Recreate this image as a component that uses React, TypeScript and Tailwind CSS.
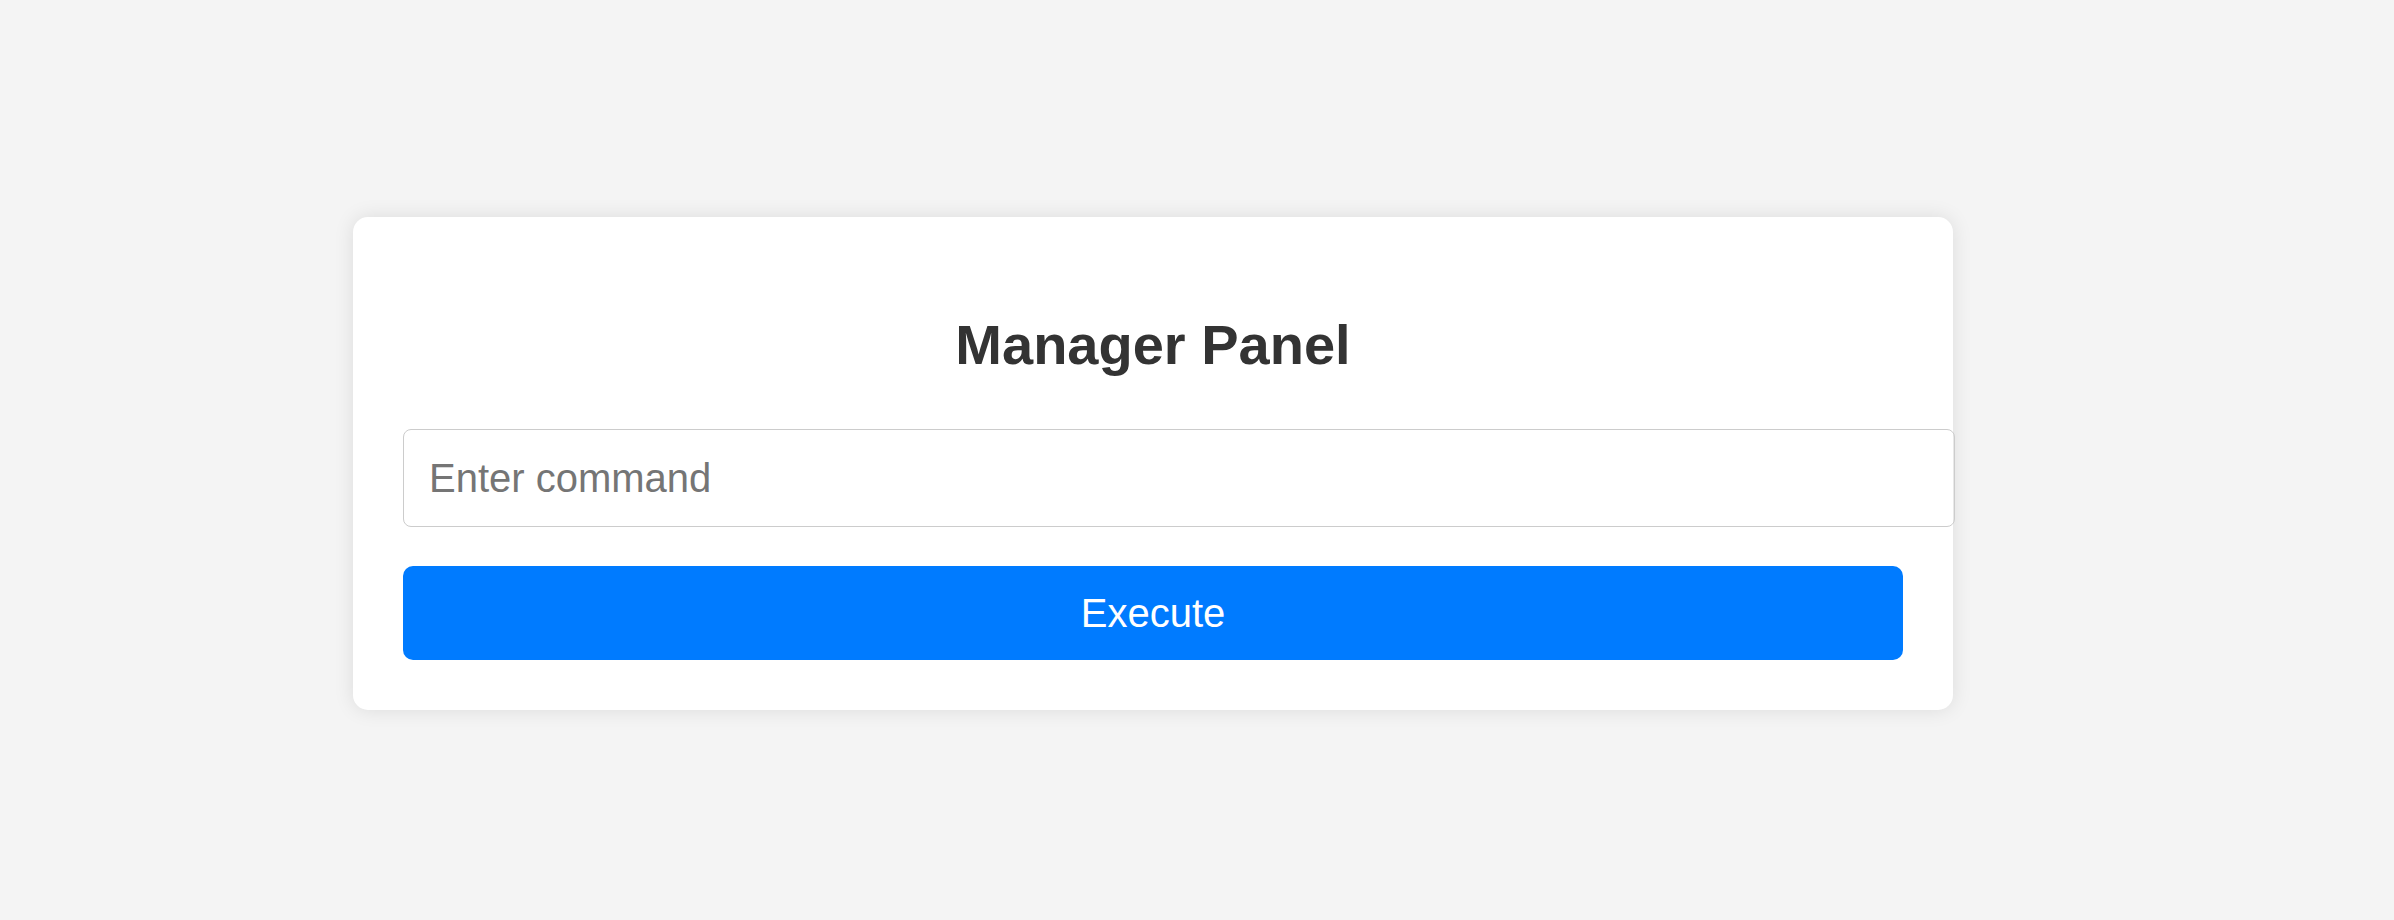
import { useState } from 'react';

const App = () => {
  const [command, setCommand] = useState('');

  return (
    <div className="min-h-screen bg-[#f4f4f4] pt-[217px] pl-[353px] font-['Liberation_Sans',Arial,sans-serif]">
      <div className="w-[1600px] bg-white rounded-[15px] p-[50px] shadow-[0_0_20px_rgba(0,0,0,0.1)]">
        <h2 className="mt-[46px] mb-[52px] text-center text-[56px] leading-[64px] font-bold text-[#333]">
          Manager Panel
        </h2>
        <input
          type="text"
          value={command}
          onChange={(e) => setCommand(e.target.value)}
          placeholder="Enter command"
          className="block box-content w-full h-[46px] px-[25px] py-[25px] mb-[39px] border border-[#ccc] rounded-[8px] text-[40px] leading-[46px] text-[#333] placeholder:text-[#757575] outline-none"
        />
        <button className="block w-full py-[24px] bg-[#007bff] text-white text-[40px] leading-[46px] rounded-[10px]">
          Execute
        </button>
      </div>
    </div>
  );
};

export default App;
